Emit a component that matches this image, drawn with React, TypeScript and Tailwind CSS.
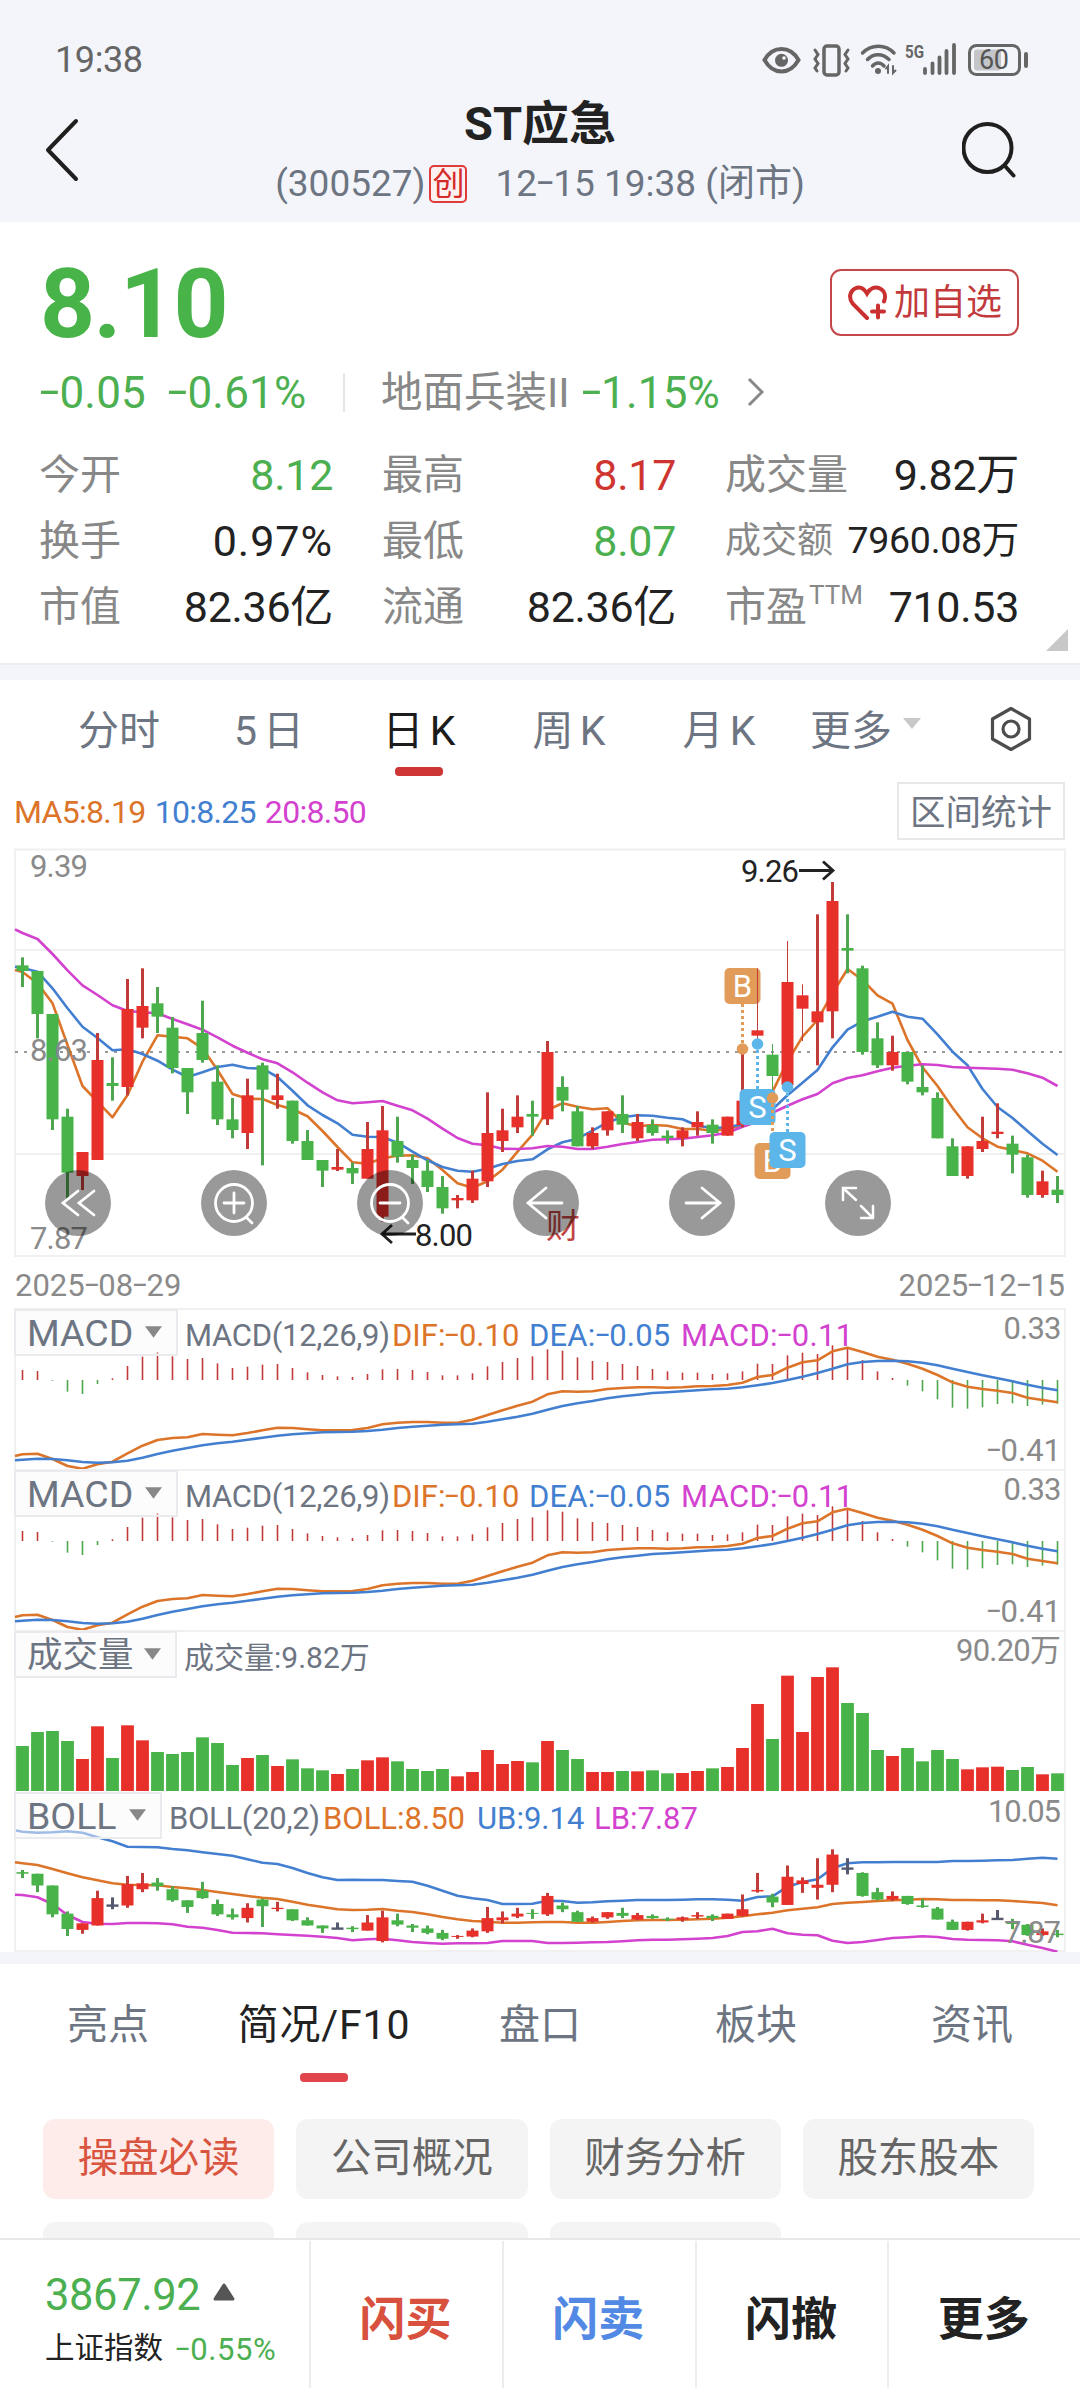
import type { ReactNode } from 'react';
import clsx from 'clsx';

const FONT = 'font-[Roboto,"Noto_Sans_CJK_SC",sans-serif]';

const RED = '#e8302a';
const GREEN = '#48b348';
const WICK_RED = '#c13c38';
const WICK_GREEN = '#4fa650';
const ORANGE = '#dc7429';
const BLUE = '#437fd0';
const PURPLE = '#d342cf';

type Candle = [dir: 'r' | 'g', high: number, top: number, bottom: number, low: number];

// Levels are in thirds of a pixel below y=840
const candles: Candle[] = [
  ['g', 352, 376, 393, 441], ['g', 393, 393, 522, 595], ['g', 522, 522, 838, 870], ['g', 806, 830, 998, 1075],
  ['r', 936, 936, 1008, 1050], ['r', 579, 660, 960, 960], ['g', 652, 729, 738, 782], ['r', 417, 507, 741, 766],
  ['r', 385, 498, 563, 595], ['g', 441, 490, 530, 579], ['g', 531, 563, 684, 700], ['g', 684, 684, 757, 822],
  ['g', 482, 579, 660, 668], ['g', 676, 725, 838, 855], ['g', 774, 838, 870, 895], ['r', 716, 766, 879, 927],
  ['g', 668, 676, 749, 976], ['r', 701, 766, 780, 806], ['g', 782, 782, 903, 911], ['g', 870, 903, 960, 960],
  ['g', 960, 960, 992, 1041], ['r', 927, 981, 989, 993], ['g', 968, 984, 1000, 1032], ['r', 846, 927, 1016, 1016],
  ['r', 798, 871, 1130, 1145], ['g', 830, 903, 950, 968], ['g', 944, 960, 984, 1032], ['g', 960, 992, 1041, 1056],
  ['g', 1008, 1041, 1105, 1121], ['r', 1065, 1074, 1081, 1105], ['r', 992, 1016, 1081, 1089], ['r', 757, 879, 1024, 1041],
  ['r', 806, 871, 903, 936], ['r', 766, 830, 862, 879], ['g', 782, 822, 830, 887], ['r', 603, 636, 838, 855],
  ['g', 709, 741, 782, 814], ['g', 798, 814, 919, 919], ['r', 862, 879, 919, 927], ['r', 814, 814, 871, 887],
  ['g', 766, 822, 854, 879], ['r', 822, 846, 895, 903], ['g', 838, 855, 879, 887], ['g', 871, 887, 894, 911],
  ['r', 862, 871, 895, 919], ['r', 814, 846, 862, 887], ['g', 838, 854, 879, 911], ['r', 830, 830, 887, 887],
  ['r', 620, 782, 855, 862], ['r', 385, 571, 587, 600], ['g', 612, 644, 708, 760], ['r', 303, 426, 735, 735],
  ['r', 433, 466, 506, 603], ['r', 223, 514, 547, 676], ['r', 126, 183, 514, 595], ['g', 223, 324, 332, 400],
  ['g', 377, 385, 636, 644], ['g', 547, 595, 676, 684], ['r', 587, 636, 676, 692], ['g', 636, 636, 725, 733],
  ['g', 676, 741, 757, 766], ['g', 757, 774, 895, 895], ['g', 895, 919, 1008, 1008], ['r', 919, 919, 1008, 1016],
  ['r', 830, 903, 927, 936], ['r', 790, 875, 882, 895], ['g', 887, 911, 944, 1000], ['g', 944, 952, 1065, 1073],
  ['r', 992, 1024, 1065, 1073], ['g', 1008, 1049, 1065, 1089],
];

// The first value of every line is its level at the left border
const ma5 = [390, 396, 430, 490, 615, 738, 785, 832, 765, 665, 586, 590, 595, 625, 690, 762, 776, 777, 795, 808, 829, 873, 921, 967, 971, 955, 947, 946, 955, 990, 1030, 1043, 1024, 989, 935, 884, 810, 790, 800, 808, 805, 848, 859, 855, 857, 867, 867, 872, 868, 855, 835, 755, 665, 590, 540, 460, 387, 420, 466, 491, 600, 682, 738, 803, 862, 895, 920, 930, 940, 962, 995];
const ma10 = [380, 384, 395, 445, 505, 560, 594, 631, 628, 642, 662, 689, 711, 697, 681, 674, 684, 686, 711, 752, 796, 825, 850, 884, 890, 891, 908, 935, 961, 981, 992, 995, 986, 972, 963, 958, 928, 907, 896, 872, 847, 832, 826, 827, 833, 838, 857, 864, 862, 853, 835, 808, 766, 728, 690, 622, 569, 544, 530, 515, 530, 536, 583, 635, 676, 747, 801, 834, 873, 911, 945];
const ma20 = [268, 279, 297, 342, 391, 436, 465, 496, 513, 517, 520, 537, 553, 569, 592, 617, 638, 658, 670, 697, 728, 757, 781, 790, 787, 783, 797, 811, 836, 866, 894, 911, 916, 926, 927, 925, 918, 920, 927, 927, 920, 912, 906, 899, 898, 896, 891, 886, 878, 860, 845, 818, 797, 778, 762, 730, 714, 706, 694, 683, 677, 673, 675, 681, 683, 685, 686, 689, 700, 713, 738];

const hist = [30, 27, -2, -35, -42, -12, 5, 42, 70, 84, 71, 63, 66, 50, 36, 40, 46, 48, 36, 23, 15, 11, 9, 18, 32, 33, 30, 24, 14, 14, 20, 41, 54, 66, 71, 92, 88, 68, 57, 54, 48, 42, 33, 26, 22, 22, 18, 20, 26, 49, 48, 74, 82, 78, 104, 98, 60, 26, 6, -17, -34, -58, -83, -86, -82, -72, -70, -78, -74, -71];
const dif = [498, 493, 491, 507, 528, 536, 523, 515, 490, 467, 450, 444, 442, 432, 434, 436, 429, 421, 413, 414, 418, 421, 421, 420, 414, 403, 398, 396, 396, 398, 398, 389, 375, 361, 347, 335, 313, 304, 305, 304, 297, 294, 292, 292, 293, 292, 289, 288, 285, 278, 261, 255, 233, 217, 211, 184, 173, 186, 200, 209, 221, 236, 255, 277, 290, 297, 302, 309, 323, 330, 337];
const dea = [511, 509, 506, 507, 511, 516, 518, 517, 512, 503, 492, 482, 474, 466, 460, 455, 449, 443, 437, 433, 430, 427, 426, 425, 423, 419, 414, 410, 407, 404, 403, 401, 395, 388, 380, 371, 359, 348, 340, 333, 325, 319, 314, 309, 307, 304, 301, 298, 296, 292, 286, 279, 270, 260, 249, 236, 223, 216, 213, 212, 214, 218, 226, 236, 246, 256, 265, 274, 284, 293, 301];

const volumeTops = [378, 336, 333, 363, 417, 319, 414, 316, 361, 396, 402, 396, 352, 369, 435, 414, 405, 438, 418, 445, 451, 462, 447, 421, 412, 424, 447, 453, 447, 469, 456, 390, 432, 423, 427, 363, 390, 417, 456, 456, 453, 454, 451, 460, 459, 453, 445, 441, 384, 252, 357, 167, 336, 171, 142, 249, 279, 390, 408, 384, 424, 390, 417, 448, 442, 440, 450, 441, 463, 460];

const bollUp = [631, 635, 638, 637, 634, 638, 652, 664, 680, 681, 682, 687, 691, 697, 702, 707, 718, 728, 732, 744, 759, 772, 780, 779, 780, 780, 783, 785, 797, 812, 827, 835, 840, 852, 852, 851, 842, 843, 848, 847, 844, 842, 840, 840, 840, 839, 838, 838, 839, 842, 831, 829, 800, 786, 778, 745, 730, 727, 727, 726, 726, 726, 726, 723, 723, 722, 721, 720, 716, 713, 716];
const bollMid = [727, 730, 735, 747, 760, 772, 781, 790, 794, 795, 796, 801, 805, 810, 816, 822, 828, 833, 837, 845, 854, 861, 868, 870, 869, 867, 872, 876, 883, 891, 898, 903, 905, 908, 908, 907, 906, 906, 908, 908, 906, 903, 901, 900, 900, 899, 898, 896, 893, 889, 883, 878, 871, 866, 862, 852, 848, 846, 843, 841, 839, 837, 838, 840, 840, 841, 841, 843, 846, 849, 856];
const bollLow = [824, 825, 832, 852, 885, 906, 911, 912, 909, 909, 910, 913, 920, 923, 930, 938, 939, 940, 943, 945, 947, 950, 954, 961, 958, 956, 961, 966, 969, 971, 970, 970, 969, 963, 963, 963, 969, 969, 968, 967, 966, 964, 961, 959, 959, 958, 956, 954, 948, 936, 934, 926, 940, 944, 946, 962, 969, 966, 960, 954, 952, 949, 951, 957, 959, 960, 961, 964, 974, 984, 995];

const flatDays = [6, 21, 55, 65];
const thinWicks = [49, 50, 51, 52];

const xAt = (i: number) => 22.5 + i * 15;
const toPoints = (values: number[], origin: number) =>
  values.map((v, i) => `${i === 0 ? 15 : xAt(i - 1)},${(origin + v / 3).toFixed(1)}`).join(' ');

function Line({ values, origin, color }: { values: number[]; origin: number; color: string }) {
  return <polyline points={toPoints(values, origin)} fill="none" stroke={color} strokeWidth={2.6} strokeLinejoin="round" />;
}

// Stretches the hyphen so that it is as wide as a minus sign
function Num({ children }: { children: string }) {
  return (
    <>
      {children.split(/(-)/).map((part, i) =>
        part === '-' ? (
          <span key={i} className="inline-block -translate-y-[0.05em] scale-x-[1.6] px-[0.08em]">-</span>
        ) : (
          part
        ),
      )}
    </>
  );
}

function StatusIcons() {
  return (
    <svg width="268" height="40" viewBox="762 40 268 40" fill="none" stroke="#666" strokeWidth="3.2" strokeLinecap="round">
      <path d="M764.500 60C769 52 775 49 781.500 49S794 52 798.500 60C794 68 788 71.500 781.500 71.500S769 68 764.500 60Z" strokeWidth="4" />
      <circle cx="781.500" cy="60.300" r="6.500" fill="#666" stroke="none" />
      <circle cx="784" cy="58" r="1.800" fill="#f4f5fa" stroke="none" />
      <rect x="824" y="46" width="15" height="29" rx="3" strokeWidth="3.500" />
      <path d="M815 50l3 4.500-3 4.500 3 4.500-3 4.500 2 3M848 50l-3 4.500 3 4.500-3 4.500 3 4.500-2 3" strokeWidth="3" />
      <path d="M862.500 53c9-9 23-9 31.500 0M867.500 59.500c6-6.500 15-6.500 21.500 0M872.500 66c3.500-4 8-4 11.500 0" strokeWidth="3.500" />
      <circle cx="878" cy="71" r="3" fill="#666" stroke="none" />
      <path d="M888 73v-7l-2 2.500M893 66v7l2.500-2.500" strokeWidth="2" />
      <text x="905" y="58" fill="#666" stroke="none" fontSize="19" fontWeight="700" fontFamily="Roboto" textLength="19" lengthAdjust="spacingAndGlyphs">5G</text>
      <path d="M925 69v4M932.500 63.500v9.500M939.500 57.500v15.500M946.500 51v22M954 45v28" strokeWidth="3.800" />
      <rect x="969.500" y="45.500" width="50" height="29" rx="7" strokeWidth="3" />
      <rect x="974" y="49.500" width="27" height="21" rx="3" fill="#c4c5c9" stroke="none" />
      <path d="M1026 54v12" strokeWidth="4" />
      <text x="979" y="69" fill="#555" stroke="none" fontSize="27" fontFamily="Roboto" textLength="30">60</text>
    </svg>
  );
}

function Header() {
  return (
    <header className="h-[222px] shrink-0 bg-[#f4f5fa]">
      <div className="flex h-[88px] items-center justify-between pt-[31px] pr-[50px] pl-[55px]">
        <span className="text-[36px] tracking-[-0.4px] text-[#666]">19:38</span>
        <StatusIcons />
      </div>
      <div className="flex h-[124px] items-center justify-between pr-[64px] pl-[44px]">
        <svg className="mr-[20px]" width="54" height="64" viewBox="0 0 54 64" fill="none" stroke="#1f1f1f" strokeWidth="4" strokeLinecap="round" strokeLinejoin="round">
          <path d="M32 3 4 32l28 29" />
        </svg>
        <div className="flex flex-col items-center pt-[3px]">
          <h1 className="flex h-[62px] items-center pt-[6px] text-[47px] font-bold text-[#222]">ST应急</h1>
          <div className="flex h-[62px] items-center pt-[2px] text-[37px] text-[#6d7582]">
            <span>(300527)</span>
            <span className="mr-[28px] ml-[4px] flex size-[38px] items-center justify-center rounded-[5px] border-2 border-[#dc3c3c] bg-[#fdf0f0] text-[32px] text-[#d42a2a]">创</span>
            <span><Num>12-15 19:38 (闭市)</Num></span>
          </div>
        </div>
        <svg width="54" height="56" viewBox="960 122 54 56" fill="none" stroke="#1f1f1f" strokeWidth="4" strokeLinecap="round">
          <circle cx="985.500" cy="148" r="24" />
          <path d="m1003 166 8.500 9.500" />
        </svg>
      </div>
    </header>
  );
}

type Tone = 'up' | 'down' | 'plain';
type Stat = { label: string; sup?: string; value: string; tone?: Tone; small?: boolean };

const stats: Stat[] = [
  { label: '今开', value: '8.12', tone: 'down' },
  { label: '最高', value: '8.17', tone: 'up' },
  { label: '成交量', value: '9.82万' },
  { label: '换手', value: '0.97%' },
  { label: '最低', value: '8.07', tone: 'down' },
  { label: '成交额', value: '7960.08万', small: true },
  { label: '市值', value: '82.36亿' },
  { label: '流通', value: '82.36亿' },
  { label: '市盈', sup: 'TTM', value: '710.53' },
];

const toneClass: Record<Tone, string> = {
  up: 'text-[#cf3530]',
  down: 'text-[#4caf50]',
  plain: 'text-[#222]',
};

function Quote() {
  return (
    <section className="relative h-[441px] shrink-0 pt-[36px] pr-[61px] pl-[40px]">
      <div className="flex h-[88px] items-center justify-between">
        <span className="pt-[3px] text-[96px] font-bold tracking-[-1.500px] text-[#48b348]">8.10</span>
        <button className="flex h-[67px] w-[189px] items-center justify-center gap-[5px] rounded-[11px] border-2 border-[#c4474a] pt-[2px] text-[36px] text-[#c23a3c]">
          <svg width="42" height="36" viewBox="0 0 42 36" fill="none" stroke="#c9302f" strokeWidth="4" strokeLinecap="round">
            <path d="M20 33 6 19C1 13 3 6 8 3.500c5-2.500 9 0 12 5 3-5 8-7.500 13-5 5 2.500 6 8 4 13" />
            <path d="M31 20.500v12M25 26.500h12" />
          </svg>
          加自选
        </button>
      </div>
      <div className="mt-[11px] flex h-[70px] items-center text-[44px]">
        <div className="flex w-[303px] gap-[22px] pt-[2px] tracking-[0.2px] text-[#4caf50]">
          <span><Num>-0.05</Num></span>
          <span><Num>-0.61%</Num></span>
        </div>
        <div className="mr-[36px] h-[39px] w-[2px] bg-[#e6e6ea]" />
        <span className="pt-[2px] text-[41.5px] text-[#888]">地面兵装II</span>
        <span className="ml-[12px] pt-[2px] tracking-[0.2px] text-[#4caf50]"><Num>-1.15%</Num></span>
        <svg className="ml-[27px]" width="18" height="30" viewBox="0 0 18 30" fill="none" stroke="#888" strokeWidth="3">
          <path d="m2 2 13 13L2 28" />
        </svg>
      </div>
      <div className="mt-[15px] grid grid-cols-[293px_293px_293px] gap-x-[50px]">
        {stats.map((s) => (
          <div key={s.label} className="flex h-[66px] items-center justify-between whitespace-nowrap">
            <span className={clsx('-ml-px flex text-[#888]', s.small ? 'text-[36px]' : 'text-[41px]')}>
              {s.label}
              {s.sup && <span className="-mt-[5px] ml-[2px] text-[26px]">{s.sup}</span>}
            </span>
            <span
              className={clsx(
                s.small ? 'text-[37.5px]' : 'text-[43px]',
                s.value.endsWith('%') ? 'tracking-[1px]' : 'tracking-[-0.3px]',
                toneClass[s.tone ?? 'plain'],
              )}
            >
              {s.value}
            </span>
          </div>
        ))}
      </div>
      <svg className="absolute right-[12px] bottom-[12px]" width="22" height="22" viewBox="0 0 22 22">
        <path d="M22 0v22H0z" fill="#c8c8c8" />
      </svg>
    </section>
  );
}

function PeriodTabs() {
  return (
    <nav className="flex h-[102px] shrink-0 items-center pl-[44px] text-[41px] text-[#6d7582]">
      {['分时', '5 日', '日 K', '周 K', '月 K'].map((tab, i) => (
        <div key={tab} className={clsx('relative flex h-full w-[150px] items-center justify-center whitespace-nowrap [word-spacing:-4px]', i === 2 && 'text-[#1c1c1c]')}>
          {tab}
          {i === 2 && <div className="absolute bottom-[6px] h-[9px] w-[48px] rounded-[4px] bg-[#ce3535]" />}
        </div>
      ))}
      <span className="ml-[16px]">更多</span>
      <svg className="mb-[16px] ml-[11px]" width="18" height="11" viewBox="0 0 18 11">
        <path d="M0 0h18l-9 11z" fill="#c8c8c8" />
      </svg>
      <svg className="mb-[5px] ml-[69px]" width="42" height="46" viewBox="0 0 42 46" fill="none" stroke="#4d4d4d" strokeWidth="3.200" strokeLinejoin="round">
        <path d="M21 2.500 39.500 13v20L21 43.500 2.500 33V13z" />
        <circle cx="21" cy="23" r="8" />
      </svg>
    </nav>
  );
}

function MaLegend() {
  return (
    <div className="flex h-[58px] shrink-0 items-center justify-between pr-[15px] pl-[14px]">
      <div className="flex gap-[9px] pt-px text-[32px] tracking-[-0.7px]">
        <span className="text-[#dc7429]">MA5:8.19</span>
        <span className="text-[#437fd0]">10:8.25</span>
        <span className="text-[#d342cf]">20:8.50</span>
      </div>
      <button className="flex h-[58px] w-[168px] items-center justify-center border-2 border-[#e8e8ea] pt-[6px] text-[35.5px] text-[#6d7582]">区间统计</button>
    </div>
  );
}

function AxisText({ x, y, end, width, children }: { x: number; y: number; end?: boolean; width?: number; children: string }) {
  return (
    <text x={x} y={y + 11} fontSize={31} fill="#8a8a8a" textAnchor={end ? 'end' : 'start'} textLength={width}>
      {children}
    </text>
  );
}

function Marker({ x, y, kind }: { x: number; y: number; kind: 'B' | 'S' }) {
  return (
    <g>
      <rect x={x - 18} y={y - 18} width={36} height={36} rx={5} fill={kind === 'B' ? '#e29c5a' : '#5cb6ea'} />
      <text x={x} y={y + 11} fontSize={31} textAnchor="middle" fill="#fff">{kind}</text>
    </g>
  );
}

function Leader({ x, from, to, dot, color }: { x: number; from: number; to: number; dot: number; color: string }) {
  return (
    <g>
      <line x1={x} x2={x} y1={from} y2={to} stroke={color} strokeWidth={3} strokeDasharray="3 3" />
      <circle cx={x} cy={dot} r={5.8} fill={color} />
    </g>
  );
}

const tools: { x: number; icon: ReactNode }[] = [
  { x: 78, icon: <path d="m0-12-15 12 15 12M16-12 1 0l15 12" /> },
  { x: 234, icon: <><circle r="18.500" /><path d="M-10 0h20M0-10v20M13 15l5 5" /></> },
  { x: 390, icon: <><circle r="18.500" /><path d="M-10 0h20M13 15l5 5" /></> },
  { x: 546, icon: <path d="M0-15-18 0 0 15M-18 0h34" /> },
  { x: 702, icon: <path d="M0-15 18 0 0 15M18 0h-34" /> },
  { x: 858, icon: <path d="M-15-3v-12h13M-15-15l13 12M15 3v12H3M15 15 3 3" strokeWidth="2.500" /> },
];

function KChart() {
  return (
    <svg className="mt-[8px] shrink-0" width="1080" height="410" viewBox="0 848 1080 410">
      <path d="M15 849.500h1050v406.500h-1050zM15 950h1050M15 1154h1050" fill="none" stroke="#f0f0f0" strokeWidth="2" />
      <line x1="15" x2="1065" y1="1052" y2="1052" stroke="#999" strokeWidth="2" strokeDasharray="3 6" />
      <Line values={ma5} origin={840} color={ORANGE} />
      <Line values={ma10} origin={840} color={BLUE} />
      <Line values={ma20} origin={840} color={PURPLE} />
      <Marker x={742.5} y={986} kind="B" />
      {candles.map(([dir, high, top, bottom, low], i) => (
        <g key={i}>
          <rect
            x={xAt(i) - (thinWicks.includes(i) ? 0.5 : 1.5)}
            y={840 + high / 3}
            width={thinWicks.includes(i) ? 1 : 3}
            height={(low - high) / 3}
            fill={dir === 'r' ? WICK_RED : WICK_GREEN}
          />
          <rect x={xAt(i) - 6} y={840 + top / 3} width={12} height={(bottom - top) / 3} fill={dir === 'r' ? RED : GREEN} />
        </g>
      ))}
      <AxisText x={30} y={866} width={58}>9.39</AxisText>
      <AxisText x={30} y={1050} width={58}>8.63</AxisText>
      <AxisText x={30} y={1237.5} width={58}>7.87</AxisText>
      <text x={741} y={881.500} fontSize={31} fill="#222" textLength={58}>9.26</text>
      <path d="M799 870.500h33M823 861.500l10 9-10 9" fill="none" stroke="#222" strokeWidth="2.800" />
      <text x={415} y={1245.500} fontSize={31} fill="#222" textLength={58}>8.00</text>
      <path d="M416 1234h-33M392 1225l-10 9 10 9" fill="none" stroke="#222" strokeWidth="2.800" />
      <text x={546} y={1238} fontSize={34} fill="#c24545">财</text>

      <Leader x={742.5} from={1004} to={1046} dot={1049} color="#e29c5a" />
      <Marker x={757.5} y={1107} kind="S" />
      <Leader x={757.5} from={1044} to={1089} dot={1044} color="#5cb6ea" />
      <Marker x={772.5} y={1161} kind="B" />
      <Leader x={772.5} from={1098} to={1143} dot={1098} color="#e29c5a" />
      <Marker x={787.5} y={1150} kind="S" />
      <Leader x={787.5} from={1087} to={1132} dot={1087} color="#5cb6ea" />

      {tools.map((t) => (
        <g key={t.x} transform={`translate(${t.x} 1203)`} fill="none" stroke="#fff" strokeWidth="2.800" strokeLinecap="round">
          <circle r="33" fill="#000" fillOpacity="0.4" stroke="none" />
          {t.icon}
        </g>
      ))}
    </svg>
  );
}

function Indicator({ name, badgeClass, legend, children }: { name: string; badgeClass: string; legend: ReactNode; children: ReactNode }) {
  return (
    <div className="relative h-[161px] shrink-0">
      {children}
      <div className="absolute top-0 left-[14px] flex h-[48px] items-center gap-[7px]">
        <button className={clsx('flex h-[47px] items-center justify-between border-2 border-[#ebebef] bg-[#fafafc]/50 pr-[14px] pl-[11px] text-[#6d7582]', badgeClass)}>
          <span className="pt-[3px]">{name}</span>
          <svg width="17" height="12" viewBox="0 0 16 11">
            <path d="M0 0h16L8 11z" fill="#888" />
          </svg>
        </button>
        <div className="flex pt-[7px] text-[31px] whitespace-nowrap text-[#6d7582]">{legend}</div>
      </div>
    </div>
  );
}

function Macd() {
  return (
    <Indicator
      name="MACD"
      badgeClass="w-[164px] text-[37.5px]"
      legend={
        <>
          <span className="w-[207px] tracking-[-0.3px]">MACD(12,26,9)</span>
          <span className="w-[137px] text-[#dc7429]"><Num>DIF:-0.10</Num></span>
          <span className="w-[152px] tracking-[0.2px] text-[#437fd0]"><Num>DEA:-0.05</Num></span>
          <span className="tracking-[0.3px] text-[#d342cf]"><Num>MACD:-0.11</Num></span>
        </>
      }
    >
      <svg width="1080" height="161" viewBox="0 1308 1080 161">
        <path d="M15 1470v-161h1050v161" fill="none" stroke="#f0f0f0" strokeWidth="2" />
        {hist.map((v, i) => (
          <rect
            key={i}
            x={xAt(i) - 0.8}
            y={v > 0 ? 1380 - v / 3 : 1380}
            width={1.6}
            height={Math.abs(v) / 3}
            fill={v > 0 ? WICK_RED : WICK_GREEN}
          />
        ))}
        <Line values={dif} origin={1290} color={ORANGE} />
        <Line values={dea} origin={1290} color={BLUE} />
        <AxisText x={1061.5} y={1328} end width={58}>0.33</AxisText>
      </svg>
      <span className="absolute right-[19px] bottom-[3px] text-[31px] text-[#8a8a8a]"><Num>-0.41</Num></span>
    </Indicator>
  );
}

function Volume() {
  return (
    <Indicator name="成交量" badgeClass="w-[163px] text-[35.5px]" legend={<span className="text-[30px]">成交量:9.82万</span>}>
      <svg width="1080" height="161" viewBox="0 1630 1080 161">
        <path d="M15 1792v-161h1050v161" fill="none" stroke="#f0f0f0" strokeWidth="2" />
        {volumeTops.map((v, i) => (
          <rect key={i} x={xAt(i) - 6.4} y={1620 + v / 3} width={12.8} height={171 - v / 3} fill={candles[i][0] === 'r' ? RED : GREEN} />
        ))}
        <AxisText x={1061} y={1650} end width={105}>90.20万</AxisText>
      </svg>
    </Indicator>
  );
}

function Boll() {
  // Same prices as the candle chart, squeezed to the band's own scale
  const scale = (v: number) => 1952 - (1256.7 - 840 - v / 3) * 0.274;
  return (
    <Indicator
      name="BOLL"
      badgeClass="w-[148px] text-[37.5px]"
      legend={
        <>
          <span className="w-[154px] tracking-[-0.3px]">BOLL(20,2)</span>
          <span className="w-[154px] text-[#dc7429]">BOLL:8.50</span>
          <span className="w-[117px] text-[#437fd0]">UB:9.14</span>
          <span className="text-[#d342cf]">LB:7.87</span>
        </>
      }
    >
      <svg width="1080" height="161" viewBox="0 1791 1080 161">
        <path d="M15 1791v160h1050v-160" fill="none" stroke="#f0f0f0" strokeWidth="2" />
        <Line values={bollUp} origin={1620} color={BLUE} />
        <Line values={bollMid} origin={1620} color={ORANGE} />
        <Line values={bollLow} origin={1620} color={PURPLE} />
        {candles.map(([dir, high, top, bottom, low], i) => {
          const flat = flatDays.includes(i);
          return (
            <g key={i}>
              <rect x={xAt(i) - 1.5} y={scale(high)} width={3} height={scale(low) - scale(high)} fill={flat ? '#565a70' : dir === 'r' ? WICK_RED : WICK_GREEN} />
              <rect
                x={xAt(i) - 6}
                y={scale(top)}
                width={12}
                height={Math.max(flat ? 2.4 : 1, scale(bottom) - scale(top))}
                fill={flat ? '#565a70' : dir === 'r' ? RED : GREEN}
              />
            </g>
          );
        })}
        <AxisText x={1061} y={1811} end width={73}>10.05</AxisText>
        <AxisText x={1061} y={1932} end width={57}>7.87</AxisText>
      </svg>
    </Indicator>
  );
}

function InfoTabs() {
  return (
    <nav className="grid h-[122px] shrink-0 grid-cols-5 text-[41px] text-[#6d7582]">
      {['亮点', '简况/F10', '盘口', '板块', '资讯'].map((tab, i) => (
        <div key={tab} className={clsx('relative flex h-full justify-center', i === 1 && 'tracking-[0.8px] text-[#222]')}>
          <span className="flex h-[122px] items-center">{tab}</span>
          {i === 1 && <div className="absolute bottom-[4px] h-[9px] w-[48px] rounded-[4px] bg-[#e0454b]" />}
        </div>
      ))}
    </nav>
  );
}

function TopicPills() {
  return (
    <div className="mt-[33px] grid min-h-0 flex-1 auto-rows-[80px] grid-cols-4 gap-x-[22px] gap-y-[23px] overflow-hidden pr-[46px] pl-[43px]">
      {['操盘必读', '公司概况', '财务分析', '股东股本'].map((label, i) => (
        <div
          key={label}
          className={clsx(
            'flex items-center justify-center rounded-[12px] pb-[2px] text-[40.5px]',
            i === 0 ? 'bg-[#fdecea] text-[#d9553f]' : 'bg-[#f4f4f4] text-[#666]',
          )}
        >
          {label}
        </div>
      ))}
      {[0, 1, 2].map((i) => (
        <div key={i} className="rounded-[12px] bg-[#f4f4f4]" />
      ))}
    </div>
  );
}

function BottomBar() {
  return (
    <footer className="flex h-[150px] shrink-0 border-t-2 border-[#e8e8ea] pt-px">
      <div className="flex w-[309px] flex-col pt-[25px] pl-[45px]">
        <div className="flex h-[60px] items-center">
          <span className="text-[43.5px] tracking-[-0.4px] text-[#4caf50]">3867.92</span>
          <svg className="mb-[8px] ml-[13px]" width="22" height="18" viewBox="0 0 22 18">
            <path d="M11 2 20 16H2z" fill="#555" stroke="#555" strokeWidth="3" strokeLinejoin="round" />
          </svg>
        </div>
        <div className="flex h-[46px] items-center">
          <span className="text-[29.5px] text-[#222]">上证指数</span>
          <span className="ml-[13px] text-[31px] tracking-[0.6px] text-[#4caf50]"><Num>-0.55%</Num></span>
        </div>
      </div>
      {[
        { label: '闪买', color: 'text-[#d8503e]' },
        { label: '闪卖', color: 'text-[#5289e4]' },
        { label: '闪撤', color: 'text-[#222]' },
        { label: '更多', color: 'text-[#222]' },
      ].map((a) => (
        <button key={a.label} className={clsx('flex flex-1 items-center justify-center border-l-2 border-[#ececee] pt-[8px] pr-[2px] text-[46px] font-bold', a.color)}>
          {a.label}
        </button>
      ))}
    </footer>
  );
}

export default function App() {
  return (
    <div className={clsx('flex h-[2388px] w-[1080px] flex-col overflow-hidden bg-white leading-none', FONT)}>
      <Header />
      <Quote />
      <div className="h-[17px] shrink-0 border-t-2 border-[#ebecef] bg-[#f4f5fa]" />
      <PeriodTabs />
      <MaLegend />
      <KChart />
      <div className="flex h-[50px] shrink-0 items-center justify-between pt-[5px] pr-[15px] pl-[15px] text-[31px] text-[#8a8a8a]">
        <span><Num>2025-08-29</Num></span>
        <span><Num>2025-12-15</Num></span>
      </div>
      <Macd />
      <Macd />
      <Volume />
      <Boll />
      <div className="h-[12px] shrink-0 bg-[#f4f5fa]" />
      <InfoTabs />
      <TopicPills />
      <BottomBar />
    </div>
  );
}
